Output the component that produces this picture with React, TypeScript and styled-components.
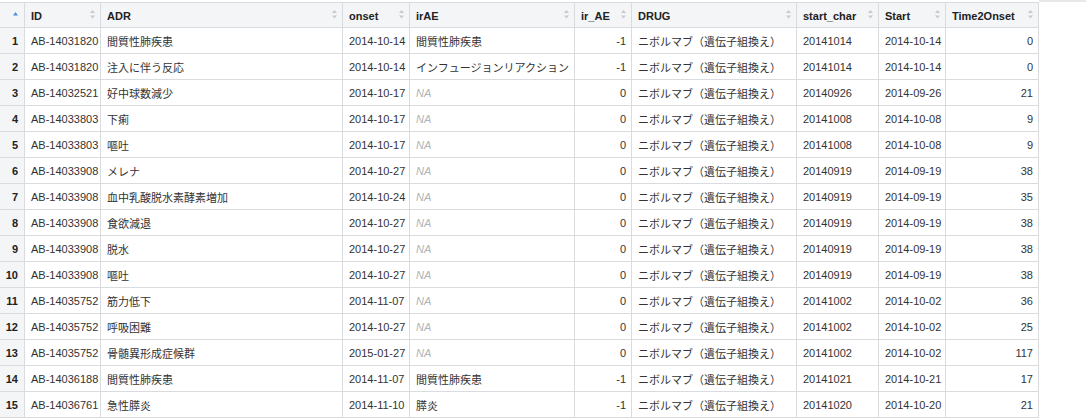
import React from "react";
import styled, { createGlobalStyle } from "styled-components";

const GlobalStyle = createGlobalStyle`
  html, body { margin: 0; padding: 0; background: #ffffff; }
  body {
    font-family: "Liberation Sans", "Noto Sans CJK JP", Arial, sans-serif;
    font-size: 11px;
    color: #333333;
  }
`;

const COLS = "25px 76px 242px 67px 165px 57px 165px 82px 67px 93px";

const Page = styled.div`
  display: flex;
  align-items: flex-start;
  width: 1086px;
`;

const Table = styled.div`
  display: flex;
  flex-direction: column;
  margin-top: 2px;
  border-top: 1px solid #dadbde;
`;

const Filler = styled.div`
  flex: 1;
  height: 0;
  border-top: 2px solid #e8e8e8;
`;

const HeadRow = styled.div`
  display: grid;
  grid-template-columns: ${COLS};
  height: 25px;
  background: #f4f5f7;
`;

const BodyRow = styled.div`
  display: grid;
  grid-template-columns: ${COLS};
  height: 26px;
  background: #ffffff;
`;

const HeadCell = styled.div`
  position: relative;
  box-sizing: border-box;
  display: flex;
  align-items: center;
  padding: 1px 6px 0 6px;
  border-right: 1px solid #dadbde;
  border-bottom: 1px solid #dadbde;
  font-weight: bold;
  color: #222222;
  white-space: nowrap;
`;

const Cell = styled.div<{ $right?: boolean; $na?: boolean; $index?: boolean }>`
  box-sizing: border-box;
  display: flex;
  align-items: center;
  justify-content: ${(p) => (p.$right || p.$index ? "flex-end" : "flex-start")};
  padding: 0 ${(p) => (p.$index ? "6px" : "5px")} 0 6px;
  border-right: 1px solid #dadbde;
  border-bottom: 1px solid #dadbde;
  white-space: nowrap;
  overflow: hidden;
  color: ${(p) => (p.$na ? "#b3b3b3" : p.$index ? "#222222" : "#333333")};
  font-style: ${(p) => (p.$na ? "italic" : "normal")};
  font-weight: ${(p) => (p.$index ? "bold" : "normal")};
  background: ${(p) => (p.$index ? "#f4f5f7" : "transparent")};
`;

const SortIcon = styled.svg`
  position: absolute;
  top: 7px;
  right: 5px;
`;

const ActiveSort = styled.svg`
  position: absolute;
  top: 9px;
  left: 13px;
`;

const Sorter = () => (
  <SortIcon width="5" height="9" viewBox="0 0 5 9">
    <polygon points="2.5,0 5,3 0,3" fill="#c9cacc" />
    <polygon points="0,5.5 5,5.5 2.5,8.5" fill="#c9cacc" />
  </SortIcon>
);

const headers = [
  "ID",
  "ADR",
  "onset",
  "irAE",
  "ir_AE",
  "DRUG",
  "start_char",
  "Start",
  "Time2Onset",
];

type Row = [string, string, string, string | null, number, string, string, number];

const DRUG = "ニボルマブ（遺伝子組換え）";

const data: Row[] = [
  ["AB-14031820", "間質性肺疾患", "2014-10-14", "間質性肺疾患", -1, "20141014", "2014-10-14", 0],
  ["AB-14031820", "注入に伴う反応", "2014-10-14", "インフュージョンリアクション", -1, "20141014", "2014-10-14", 0],
  ["AB-14032521", "好中球数減少", "2014-10-17", null, 0, "20140926", "2014-09-26", 21],
  ["AB-14033803", "下痢", "2014-10-17", null, 0, "20141008", "2014-10-08", 9],
  ["AB-14033803", "嘔吐", "2014-10-17", null, 0, "20141008", "2014-10-08", 9],
  ["AB-14033908", "メレナ", "2014-10-27", null, 0, "20140919", "2014-09-19", 38],
  ["AB-14033908", "血中乳酸脱水素酵素増加", "2014-10-24", null, 0, "20140919", "2014-09-19", 35],
  ["AB-14033908", "食欲減退", "2014-10-27", null, 0, "20140919", "2014-09-19", 38],
  ["AB-14033908", "脱水", "2014-10-27", null, 0, "20140919", "2014-09-19", 38],
  ["AB-14033908", "嘔吐", "2014-10-27", null, 0, "20140919", "2014-09-19", 38],
  ["AB-14035752", "筋力低下", "2014-11-07", null, 0, "20141002", "2014-10-02", 36],
  ["AB-14035752", "呼吸困難", "2014-10-27", null, 0, "20141002", "2014-10-02", 25],
  ["AB-14035752", "骨髄異形成症候群", "2015-01-27", null, 0, "20141002", "2014-10-02", 117],
  ["AB-14036188", "間質性肺疾患", "2014-11-07", "間質性肺疾患", -1, "20141021", "2014-10-21", 17],
  ["AB-14036761", "急性膵炎", "2014-11-10", "膵炎", -1, "20141020", "2014-10-20", 21],
];

export default function App() {
  return (
    <>
      <GlobalStyle />
      <Page>
        <Table>
          <HeadRow>
            <HeadCell>
              <ActiveSort width="5" height="4" viewBox="0 0 5 4">
                <polygon points="2.5,0 5,3.5 0,3.5" fill="#4a8fd8" />
              </ActiveSort>
            </HeadCell>
            {headers.map((h) => (
              <HeadCell key={h}>
                {h}
                <Sorter />
              </HeadCell>
            ))}
          </HeadRow>
          {data.map((r, i) => (
            <BodyRow key={i}>
              <Cell $index>{i + 1}</Cell>
              <Cell>{r[0]}</Cell>
              <Cell>{r[1]}</Cell>
              <Cell>{r[2]}</Cell>
              {r[3] === null ? <Cell $na>NA</Cell> : <Cell>{r[3]}</Cell>}
              <Cell $right>{r[4]}</Cell>
              <Cell>{DRUG}</Cell>
              <Cell>{r[5]}</Cell>
              <Cell>{r[6]}</Cell>
              <Cell $right>{r[7]}</Cell>
            </BodyRow>
          ))}
        </Table>
        <Filler />
      </Page>
    </>
  );
}
